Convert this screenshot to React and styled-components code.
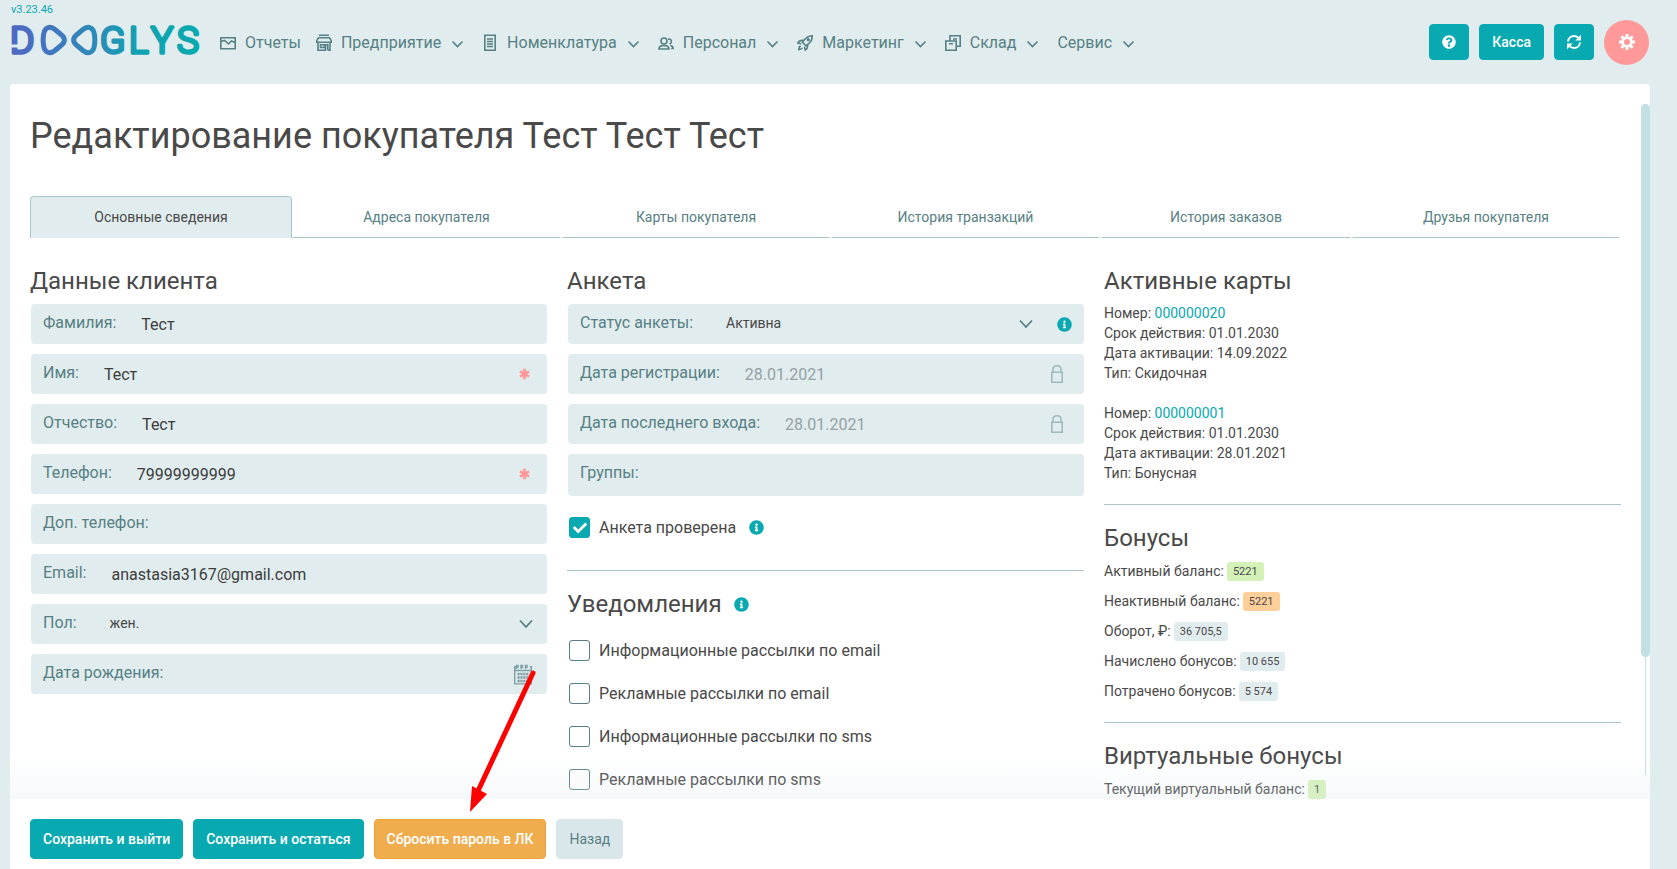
import React, { useState } from "react";
import styled, { createGlobalStyle } from "styled-components";
import { FaCheck, FaInfoCircle, FaQuestionCircle } from "react-icons/fa";

const GlobalStyle = createGlobalStyle`
  * {
    box-sizing: border-box;
  }
  body {
    margin: 0;
    background-color: #e1ecee;
    color: #494949;
    font-family: Roboto, "Liberation Sans", sans-serif;
    font-size: 14px;
    line-height: 20px;
  }
  button, input, select {
    font-family: inherit;
  }
`;

const Page = styled.div`
  display: flex;
  flex-direction: column;
  height: 100vh;
  padding: 0 27px 0 10px;
`;

const Header = styled.header`
  display: flex;
  align-items: center;
  flex-shrink: 0;
  height: 84px;
  padding-right: 1px;
`;

const Brand = styled.a`
  display: flex;
  flex-direction: column;
  align-self: flex-start;
  padding-top: 3px;
  color: #08a9b0;
  font-size: 11px;
  line-height: 14px;
  text-decoration: none;
`;

const Version = styled.span`
  padding-left: 1px;
`;

const LogoMark = styled.svg`
  width: 194px;
  height: 48px;
  overflow: visible;
`;

const Nav = styled.nav`
  display: flex;
  align-items: center;
  gap: 15px;
  margin-left: 16px;
  padding-top: 1px;
`;

const NavItem = styled.a`
  display: flex;
  align-items: center;
  gap: 9px;
  padding: 0;
  border: none;
  background: none;
  color: #568083;
  font-size: 16px;
  line-height: 24px;
  text-decoration: none;
  cursor: pointer;
`;

const NavIcon = styled.svg`
  width: 16px;
  height: 18px;
  fill: none;
  stroke: currentColor;
  stroke-width: 1.6;
`;

const Caret = styled.svg`
  width: 17px;
  height: 16px;
  fill: none;
  stroke: #568083;
  stroke-width: 1.6;
`;

const Actions = styled.div`
  display: flex;
  align-items: center;
  gap: 10px;
  margin-left: auto;
`;

const Button = styled.button`
  height: ${(props) => (props.$size === "sm" ? "36px" : "40px")};
  padding: 0 12px;
  border: 1px solid ${(props) => props.$border || props.$bg || "#08a9b0"};
  border-radius: 4px;
  background-color: ${(props) => props.$bg || "#08a9b0"};
  color: ${(props) => props.$color || "#fff"};
  font-size: 14px;
  font-weight: ${(props) => props.$weight || 500};
  line-height: 20px;
  cursor: pointer;
`;

const IconButton = styled(Button)`
  display: flex;
  align-items: center;
  justify-content: center;
  width: 40px;
  padding: 0;
`;

const SettingsButton = styled.button`
  display: flex;
  align-items: center;
  justify-content: center;
  width: 45px;
  height: 45px;
  padding: 0;
  border: none;
  border-radius: 50%;
  background-color: #ff9999;
  color: #fff;
  cursor: pointer;
`;

const Panel = styled.main`
  position: relative;
  display: flex;
  flex-direction: column;
  flex: 1;
  min-height: 0;
  border-radius: 4px 4px 0 0;
  background-color: #fff;
`;

const ScrollArea = styled.div`
  flex: 1;
  min-height: 0;
  padding: 30px 29px 0 20px;
  overflow-y: auto;
  scrollbar-width: none;
`;

const Fade = styled.div`
  position: relative;
  height: 44px;
  margin-top: -44px;
  background: linear-gradient(rgba(220, 232, 236, 0), rgba(220, 232, 236, 0.25));
  pointer-events: none;
`;

const ScrollTrack = styled.div`
  position: absolute;
  top: 20px;
  right: 0;
  bottom: 94px;
  width: 9px;
  background: linear-gradient(#c2dfe3, #c2dfe3) center / 1px 100% no-repeat;
`;

const ScrollThumb = styled.div`
  height: 82.4%;
  border-radius: 5px;
  background-color: #c2dfe3;
`;

const Title = styled.h1`
  margin: 0 0 38px;
  font-size: 36px;
  font-weight: 400;
  line-height: 44px;
`;

const Tabs = styled.div`
  display: grid;
  grid-template-columns: 262fr 270fr 269fr 270fr 251fr 269fr;
`;

const Tab = styled.button`
  height: 42px;
  margin-right: ${(props) => (props.$active ? "0" : "1px")};
  padding: 0;
  border: 1px solid ${(props) => (props.$active ? "#a9c6cd" : "transparent")};
  border-bottom-color: ${(props) => (props.$active ? "#e1ecee" : "#a9c6cd")};
  border-radius: ${(props) => (props.$active ? "4px 4px 0 0" : "0")};
  background-color: ${(props) => (props.$active ? "#e1ecee" : "transparent")};
  color: ${(props) => (props.$active ? "#494949" : "#568083")};
  font-size: 14px;
  cursor: pointer;
`;

const Columns = styled.div`
  display: grid;
  grid-template-columns: repeat(3, 1fr);
  gap: 20px;
  margin-top: 28px;
`;

const Column = styled.section`
  min-width: 0;
`;

const Heading = styled.h2`
  display: flex;
  align-items: center;
  gap: 12px;
  margin: 0 0 7px;
  font-size: 24px;
  font-weight: 400;
  line-height: 30px;
`;

const Divider = styled.hr`
  height: 1px;
  margin: 21px 0 18px;
  border: none;
  background-color: #a9c6cd;
`;

const Fields = styled.div`
  display: flex;
  flex-direction: column;
  gap: 10px;
  padding: 1px 0 0 1px;
`;

const FieldBox = styled.div`
  display: flex;
  align-items: center;
  height: ${(props) => (props.$tall ? "42px" : "40px")};
  padding: 0 12px;
  border-radius: 4px;
  background-color: #e1ecee;
`;

const FieldLabel = styled.label`
  align-self: flex-start;
  flex-shrink: 0;
  color: #568083;
  font-size: 16px;
  line-height: 37px;
`;

const FieldInput = styled.input`
  flex: 1;
  min-width: 0;
  height: 40px;
  padding: 0 0 0 25px;
  border: none;
  outline: none;
  background: transparent;
  color: ${(props) => (props.readOnly ? "#93a1a3" : "#3c3c3c")};
  font-size: 16px;
`;

const FieldSelect = styled.select`
  flex: 1;
  align-self: flex-start;
  min-width: 0;
  height: 38px;
  padding: 0 0 0 33px;
  border: none;
  outline: none;
  appearance: none;
  background: transparent;
  color: #494949;
  font-size: 14px;
`;

const FieldEnd = styled.span`
  display: flex;
  align-items: center;
  gap: 24px;
  padding-right: ${(props) => props.$inset || "0"};
`;

const InfoIcon = styled(FaInfoCircle)`
  flex-shrink: 0;
  width: 15px;
  height: 15px;
  color: #08a9b0;
`;

const CheckRow = styled.label`
  display: flex;
  align-items: center;
  height: 43px;
  padding-left: 1px;
  font-size: 16px;
`;

const CheckBox = styled.span`
  display: grid;
  place-items: center;
  width: 21px;
  height: 21px;
  margin-right: 9px;
  color: #fff;

  > * {
    grid-area: 1 / 1;
  }
  svg {
    pointer-events: none;
  }
`;

const CheckInput = styled.input`
  width: 21px;
  height: 21px;
  margin: 0;
  border: 1px solid #568083;
  border-radius: 3px;
  appearance: none;
  background-color: #fff;

  &:checked {
    border-color: #08a9b0;
    background-color: #08a9b0;
  }
`;

const CheckText = styled.span`
  margin-right: 13px;
`;

const CheckList = styled.div`
  padding: 3px 0 0 1px;
`;

const CardInfo = styled.p`
  margin: 0 0 20px;
`;

const CardLink = styled.a`
  color: #08a9b0;
  text-decoration: none;
`;

const Stats = styled.div`
  display: flex;
  flex-direction: column;
  gap: 10px;
  padding-top: 1px;
`;

const Stat = styled.div`
  display: flex;
  align-items: center;
  gap: 3px;
  height: 20px;
`;

const Badge = styled.span`
  padding: 0 6px;
  border-radius: 3px;
  background-color: ${(props) => props.$bg || "#e1ecee"};
  font-size: 11px;
  line-height: 19px;
`;

const Footer = styled.footer`
  display: flex;
  flex-shrink: 0;
  gap: 10px;
  padding: 20px 20px 10px;
`;

const Pointer = styled.svg`
  position: absolute;
  left: 458px;
  bottom: 54px;
  width: 70px;
  height: 148px;
  pointer-events: none;
`;

const Logo = () => (
  <LogoMark viewBox="0 0 194 48" role="img" aria-label="DOOGLYS">
    <defs>
      <linearGradient id="brand" gradientUnits="userSpaceOnUse" x1="0" y1="0" x2="194" y2="0">
        <stop offset="0.08" stopColor="#4b6bc3" />
        <stop offset="0.35" stopColor="#3583bb" />
        <stop offset="0.68" stopColor="#10a3b0" />
        <stop offset="1" stopColor="#08a9b0" />
      </linearGradient>
    </defs>
    <g
      fill="url(#brand)"
      stroke="url(#brand)"
      strokeWidth="3.4"
      strokeLinejoin="round"
      fontFamily="Roboto, sans-serif"
      fontSize="37"
      fontWeight="300"
    >
      <text x="0" y="36">D</text>
      <text x="90" y="36">G</text>
      <text x="119" y="36">L</text>
      <text x="141" y="36">Y</text>
      <text x="167" y="36">S</text>
    </g>
    <path d="M0 29h9" stroke="#e1ecee" strokeWidth="3" />
    <g fill="none" stroke="url(#brand)" strokeWidth="5">
      <path d="M33.500 18C34.500 10 40 8.500 45 12.500L51 17.500C55.500 21 55.500 25 51 28.500L45 33.500C40 37.500 34.500 36 33.500 28C33 25 33 21 33.500 18Z" />
      <path d="M84.500 18C83.500 10 78 8.500 73 12.500L67 17.500C62.500 21 62.500 25 67 28.500L73 33.500C78 37.500 83.500 36 84.500 28C85 25 85 21 84.500 18Z" />
    </g>
  </LogoMark>
);

const Chevron = () => (
  <Caret viewBox="0 0 17 16">
    <path d="M2.500 6.500l5 5 5-5" />
  </Caret>
);

const SelectArrow = () => (
  <svg width="14" height="10" fill="none" stroke="#568083" strokeWidth="1.8">
    <path d="M1 1.500l6 6.500 6-6.500" />
  </svg>
);

const RequiredIcon = () => (
  <svg width="11" height="12" stroke="#ff9999" strokeWidth="2.800">
    <path d="M5.500 .8v10.400M1 3.400l9 5.200M10 3.400l-9 5.200" />
  </svg>
);

const icons = {
  reports: (
    <NavIcon viewBox="0 0 16 18">
      <path d="M.8 3.800h14.400v11H.8zM1 7.500l3.500-1 4 3.500 3-3 3.500 1.500" />
    </NavIcon>
  ),
  company: (
    <NavIcon viewBox="0 0 16 18">
      <path d="M3 1.200h10M2.500 3.800h11L15.200 6.400v1.800H.8V6.400zM2 8v8.200h2.500M14 8v8.200h-2M4.500 10.800h4v2.700h-4zM4.500 16.200h5v-5.400h2.300v5.400" />
    </NavIcon>
  ),
  items: (
    <NavIcon viewBox="0 0 16 18">
      <path d="M2.800 1.300h10.400v14.900H2.800zM5 5h6M5 7.500h6M5 10h6M5 12.500h6" />
    </NavIcon>
  ),
  staff: (
    <NavIcon viewBox="0 0 16 18">
      <circle cx="6" cy="7" r="3" />
      <path d="M.9 15c0-2.500 2-3.500 5-3.500s5 1 5 3.500zM10 5.200c2.500-.7 4 1.200 3.200 3.300-.3.800-.9 1.300-1.700 1.500M12.500 11.500c1.700.4 2.600 1.300 2.600 3h-2" />
    </NavIcon>
  ),
  marketing: (
    <NavIcon viewBox="0 0 16 18">
      <path d="M15.200 1.800c-4.500 0-7 2.200-9.700 6.600l3.400 3.400c4.500-2.600 6.500-5.500 6.300-10zM6.500 6.500C3.800 6 2 7 .8 9l3.500.8M10.500 10.700c.5 2.500-.5 4.300-2.200 5.500l-.9-3.500" />
      <path d="M3.500 11.800c-1.300.8-1.700 2-1.700 3.800 1.700 0 2.800-.5 3.600-1.700" />
      <circle cx="11.300" cy="5.700" r=".8" />
    </NavIcon>
  ),
  stock: (
    <NavIcon viewBox="0 0 16 18">
      <path d="M5 7V1.800h10.200v10.400H11.500M.8 7h10.400v9.200H.8zM8 5h4M4 9.800h4" />
    </NavIcon>
  ),
};

const menu = [
  { title: "Отчеты", icon: icons.reports, single: true },
  { title: "Предприятие", icon: icons.company },
  { title: "Номенклатура", icon: icons.items },
  { title: "Персонал", icon: icons.staff },
  { title: "Маркетинг", icon: icons.marketing },
  { title: "Склад", icon: icons.stock },
  { title: "Сервис" },
];

const tabs = [
  "Основные сведения",
  "Адреса покупателя",
  "Карты покупателя",
  "История транзакций",
  "История заказов",
  "Друзья покупателя",
];

const cards = [
  { number: "000000020", until: "01.01.2030", activated: "14.09.2022", type: "Скидочная" },
  { number: "000000001", until: "01.01.2030", activated: "28.01.2021", type: "Бонусная" },
];

const stats = [
  { title: "Активный баланс:", value: "5221", bg: "#d4f1b8" },
  { title: "Неактивный баланс:", value: "5221", bg: "#ffcf99" },
  { title: "Оборот, ₽:", value: "36 705,5" },
  { title: "Начислено бонусов:", value: "10 655" },
  { title: "Потрачено бонусов:", value: "5 574" },
];

const mailings = [
  "Информационные рассылки по email",
  "Рекламные рассылки по email",
  "Информационные рассылки по sms",
  "Рекламные рассылки по sms",
];

const RefreshIcon = () => (
  <svg width="16" height="16" viewBox="0 0 16 16" fill="none" stroke="#fff" strokeWidth="2">
    <path d="M2 7.500C2.300 4.200 5 2 8 2c2 0 3.700.8 4.800 2.300M14 8.500c-.3 3.300-3 5.500-6 5.500-2 0-3.700-.8-4.800-2.300" />
    <path d="M15 .8v5.700H9.300zM1 15.200V9.500h5.700z" fill="#fff" stroke="none" />
  </svg>
);

const GearIcon = () => (
  <svg width="16" height="16" viewBox="0 0 16 16" fill="none" stroke="#fff">
    <circle cx="8" cy="8" r="4.400" strokeWidth="2.800" />
    <path
      d="M8 0v3M8 13v3M0 8h3M13 8h3M2.350 2.350l2 2M11.650 11.650l2 2M13.650 2.350l-2 2M4.350 11.650l-2 2"
      strokeWidth="2.800"
    />
  </svg>
);

const LockIcon = () => (
  <svg width="12" height="18" fill="none" stroke="#9dbabf" strokeWidth="1.600">
    <path d="M.8 7.300h10.400v9.900H.8zM2 7V4.500C2 2 3.800.8 6 .8S10 2 10 4.500V7" />
  </svg>
);

const CalendarIcon = () => (
  <svg width="20" height="21" fill="none" stroke="#7f9ea2" strokeWidth="1.400">
    <path d="M3 2.700H1.700v17.200h16.600V2.700H17M3.500 5V1.500h1.500V4M8 5V1.500h1.500V4M12.500 5V1.500H14V4M2 6.500h16" />
    <path d="M4.500 10h11M4.500 13.500h11M4.500 17h11" strokeWidth="2.400" strokeDasharray="2.200 .7" />
  </svg>
);

const Field = ({ id, label, value, required, locked, end, tall }) => (
  <FieldBox $tall={tall}>
    <FieldLabel htmlFor={id}>{label}</FieldLabel>
    <FieldInput id={id} defaultValue={value} readOnly={locked} />
    {required && (
      <FieldEnd $inset="5px">
        <RequiredIcon />
      </FieldEnd>
    )}
    {locked && (
      <FieldEnd $inset="9px">
        <LockIcon />
      </FieldEnd>
    )}
    {end}
  </FieldBox>
);

const Check = ({ text, checked, info }) => (
  <CheckRow>
    <CheckBox>
      <CheckInput type="checkbox" defaultChecked={checked} />
      {checked && <FaCheck size={14} />}
    </CheckBox>
    <CheckText>{text}</CheckText>
    {info && <InfoIcon />}
  </CheckRow>
);

const App = () => {
  const [active, setActive] = useState(0);

  return (
    <>
      <GlobalStyle />
      <Page>
        <Header>
          <Brand href="#">
            <Version>v3.23.46</Version>
            <Logo />
          </Brand>
          <Nav>
            {menu.map((item) => (
              <NavItem
                key={item.title}
                as={item.single ? "a" : "button"}
                href={item.single ? "#" : undefined}
              >
                {item.icon}
                {item.title}
                {!item.single && <Chevron />}
              </NavItem>
            ))}
          </Nav>
          <Actions>
            <IconButton $size="sm" aria-label="Помощь">
              <FaQuestionCircle size={14} />
            </IconButton>
            <Button $size="sm">Касса</Button>
            <IconButton $size="sm" aria-label="Обновить">
              <RefreshIcon />
            </IconButton>
            <SettingsButton aria-label="Настройки">
              <GearIcon />
            </SettingsButton>
          </Actions>
        </Header>

        <Panel>
          <ScrollArea>
            <Title>Редактирование покупателя Тест Тест Тест</Title>
            <Tabs role="tablist">
              {tabs.map((tab, i) => (
                <Tab
                  key={tab}
                  role="tab"
                  aria-selected={i === active}
                  $active={i === active}
                  onClick={() => setActive(i)}
                >
                  {tab}
                </Tab>
              ))}
            </Tabs>

            <Columns>
              <Column>
                <Heading>Данные клиента</Heading>
                <Fields>
                  <Field id="surname" label="Фамилия:" value="Тест" />
                  <Field id="name" label="Имя:" value="Тест" required />
                  <Field id="patronymic" label="Отчество:" value="Тест" />
                  <Field id="phone" label="Телефон:" value="79999999999" required />
                  <Field id="phone2" label="Доп. телефон:" />
                  <Field id="email" label="Email:" value="anastasia3167@gmail.com" />
                  <FieldBox>
                    <FieldLabel htmlFor="gender">Пол:</FieldLabel>
                    <FieldSelect id="gender">
                      <option>жен.</option>
                      <option>муж.</option>
                    </FieldSelect>
                    <FieldEnd $inset="2px">
                      <SelectArrow />
                    </FieldEnd>
                  </FieldBox>
                  <Field
                    id="birthday"
                    label="Дата рождения:"
                    end={
                      <FieldEnd $inset="2px">
                        <CalendarIcon />
                      </FieldEnd>
                    }
                  />
                </Fields>
              </Column>

              <Column>
                <Heading>Анкета</Heading>
                <Fields>
                  <FieldBox>
                    <FieldLabel htmlFor="status">Статус анкеты:</FieldLabel>
                    <FieldSelect id="status">
                      <option>Активна</option>
                      <option>Не активна</option>
                    </FieldSelect>
                    <FieldEnd>
                      <SelectArrow />
                      <InfoIcon />
                    </FieldEnd>
                  </FieldBox>
                  <Field id="registered" label="Дата регистрации:" value="28.01.2021" locked />
                  <Field id="lastLogin" label="Дата последнего входа:" value="28.01.2021" locked />
                  <Field id="groups" label="Группы:" tall />
                  <Check text="Анкета проверена" checked info />
                </Fields>
                <Divider />
                <Heading>
                  Уведомления <InfoIcon />
                </Heading>
                <CheckList>
                  {mailings.map((text) => (
                    <Check key={text} text={text} />
                  ))}
                </CheckList>
              </Column>

              <Column>
                <Heading>Активные карты</Heading>
                {cards.map((card) => (
                  <CardInfo key={card.number}>
                    Номер: <CardLink href="#">{card.number}</CardLink>
                    <br />
                    Срок действия: {card.until}
                    <br />
                    Дата активации: {card.activated}
                    <br />
                    Тип: {card.type}
                  </CardInfo>
                ))}
                <Divider />
                <Heading>Бонусы</Heading>
                <Stats>
                  {stats.map((stat) => (
                    <Stat key={stat.title}>
                      {stat.title}
                      <Badge $bg={stat.bg}>{stat.value}</Badge>
                    </Stat>
                  ))}
                </Stats>
                <Divider />
                <Heading>Виртуальные бонусы</Heading>
                <Stats>
                  <Stat>
                    Текущий виртуальный баланс:
                    <Badge $bg="#d4f1b8">1</Badge>
                  </Stat>
                </Stats>
              </Column>
            </Columns>
          </ScrollArea>
          <Fade />
          <ScrollTrack>
            <ScrollThumb />
          </ScrollTrack>
          <Footer>
            <Button>Сохранить и выйти</Button>
            <Button>Сохранить и остаться</Button>
            <Button $bg="#f0ad4e" $border="#eea236">
              Сбросить пароль в ЛК
            </Button>
            <Button $bg="#dae7ea" $color="#568083" $weight={400}>
              Назад
            </Button>
          </Footer>
          <Pointer viewBox="0 0 70 148">
            <path d="M65 6L10 124" stroke="#f00" strokeWidth="5" strokeLinecap="round" />
            <path d="M2 145L4 119L19 127Z" fill="#f00" />
          </Pointer>
        </Panel>
      </Page>
    </>
  );
};

export default App;
